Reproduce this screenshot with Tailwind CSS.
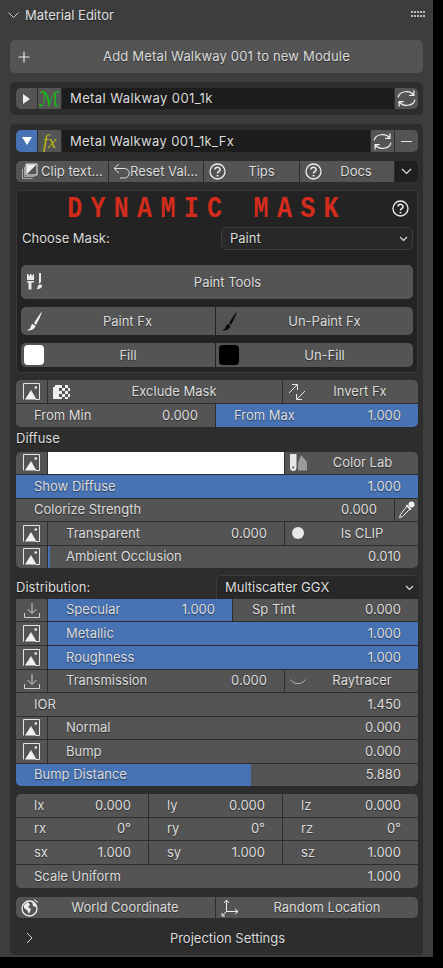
<!DOCTYPE html>
<html>
<head>
<meta charset="utf-8">
<script src="https://cdn.jsdelivr.net/npm/@tailwindcss/browser@4"></script>
</head>
<body class="bg-black">
<div class="w-[443px] h-[968px] overflow-hidden bg-black font-['Inter','Liberation_Sans',sans-serif] text-[13px] leading-none text-[#dcdcdc] [text-shadow:0_1px_1px_#0000007a]">
<div class="w-[433px] h-[957px] bg-[#3d3d3d] px-[10px]">

  <div class="h-[40px] flex items-center relative -mx-[2px]">
    <svg class="w-[11px] h-[7px] -mt-[9px]" viewBox="0 0 11 7" fill="none" stroke="#cfcfcf" stroke-width="1"><path d="M.5 .5l5 5 5-5"/></svg>
    <span class="ml-[6px] -mt-[9px] text-[#e0e0e0]">Material Editor</span>
    <svg class="absolute right-[-1px] top-[11px] w-[15px] h-[7px]" viewBox="0 0 15 7" fill="#bdbdbd"><rect x="0" y="0" width="2" height="2"/><rect x="3" y="0" width="2" height="2"/><rect x="6" y="0" width="2" height="2"/><rect x="9" y="0" width="2" height="2"/><rect x="12" y="0" width="2" height="2"/><rect x="0" y="4" width="2" height="2"/><rect x="3" y="4" width="2" height="2"/><rect x="6" y="4" width="2" height="2"/><rect x="9" y="4" width="2" height="2"/><rect x="12" y="4" width="2" height="2"/></svg>
  </div>

  <div class="h-[33px] rounded-[5px] bg-[#545454] flex items-center relative">
    <svg class="absolute left-[8px] w-[12px] h-[12px]" viewBox="0 0 12 12" stroke="#e6e6e6" stroke-width="1.2"><path d="M6 0.5v11M0.5 6h11"/></svg>
    <span class="w-full text-center pl-[20px] tracking-[0.17px]">Add Metal Walkway 001 to new Module</span>
  </div>

  <div class="mt-[9px] h-[33px] rounded-[5px] bg-[#2d2d2d] pl-[6px] pr-[5px] pt-[6px]">
    <div class="h-[21px] flex gap-px rounded-[5px] overflow-hidden">
      <div class="w-[21px] bg-[#545454] flex items-center justify-center"><svg class="w-[9px] h-[10px]" viewBox="0 0 9 10" fill="#eee"><path d="M1 0l7 5-7 5z"/></svg></div>
      <div class="w-[23px] bg-[#545454] flex items-center justify-center font-['DejaVu_Sans',sans-serif] italic text-[20px] text-[#12c012] [text-shadow:none]">ℳ</div>
      <div class="w-[332px] bg-[#1d1d1d] flex items-center pl-[8px] tracking-[0.4px]">Metal Walkway 001_1k</div>
      <div class="flex-1 bg-[#545454] flex items-center justify-center">
        <svg class="w-[19px] h-[19px]" viewBox="0 0 18 18" fill="none" stroke="#f0f0f0" stroke-width="1.150"><path d="M1 8a8 6.500 0 0 1 15-2M16 1.500V6h-4.500M17 10a8 6.500 0 0 1-15 2M2 16.500V12h4.500"/></svg>
      </div>
    </div>
  </div>

  <div class="mt-[9px] h-[831px] rounded-[5px] bg-[#2d2d2d] pl-[6px] pr-[5px] pt-[6px]">

    <div class="h-[22px] flex gap-px rounded-[5px] overflow-hidden">
      <div class="w-[21px] bg-[#4772b3] flex items-center justify-center"><svg class="w-[10px] h-[8px]" viewBox="0 0 10 8" fill="#fff"><path d="M0 0h10l-5 8z"/></svg></div>
      <div class="w-[23px] bg-[#545454] flex items-center justify-center font-['Liberation_Serif',serif] italic text-[19px] text-[#b9b416] [text-shadow:none]">fx</div>
      <div class="w-[308px] bg-[#1d1d1d] flex items-center pl-[8px] tracking-[0.36px]">Metal Walkway 001_1k_Fx</div>
      <div class="w-[23px] bg-[#545454] flex items-center justify-center">
        <svg class="w-[19px] h-[19px]" viewBox="0 0 18 18" fill="none" stroke="#f0f0f0" stroke-width="1.150"><path d="M1 8a8 6.500 0 0 1 15-2M16 1.500V6h-4.500M17 10a8 6.500 0 0 1-15 2M2 16.500V12h4.500"/></svg>
      </div>
      <div class="flex-1 bg-[#545454] flex items-center justify-center"><span class="w-[11px] h-px bg-[#e6e6e6]"></span></div>
    </div>

    <div class="mt-[9px] h-[21px] flex gap-px rounded-[5px] overflow-hidden">
      <div class="w-[92px] bg-[#545454] flex items-center pl-[5px] gap-[3px]">
        <svg class="w-[17px] h-[17px] shrink-0" viewBox="0 0 17 17" fill="none"><path d="M5 1h11v11H5z" fill="#545454" stroke="#eee"/><path d="M5.500 11.500V1.500H15.500z" fill="#eee"/><path d="M3.500 4v9.500h10M1.500 6v9.500h10" stroke="#a8a8a8"/></svg>
        <span class="whitespace-nowrap">Clip text...</span>
      </div>
      <div class="w-[94px] bg-[#545454] flex items-center pl-[4px] whitespace-nowrap">
        <svg class="w-[17px] h-[17px] shrink-0" viewBox="0 0 17 17" fill="none" stroke="#e0e0e0"><path d="M6 1L1 5.500l5 4.500M1.500 5.500h10a4.500 4.500 0 0 1 0 9.500H7"/></svg>
        <span>Reset Val...</span>
      </div>
      <div class="w-[95px] bg-[#545454] flex items-center relative">
        <svg class="absolute left-[5px] w-[17px] h-[17px]" viewBox="0 0 17 17" fill="none" stroke="#eee" stroke-width="1.300"><circle cx="8.500" cy="8.500" r="7.500"/><path d="M6 6.500a2.500 2.300 0 1 1 3.700 2.100c-.9.500-1.200 1-1.200 1.900" stroke-width="1.600"/><path d="M8.500 12v1.400" stroke-width="1.800"/></svg>
        <span class="w-full text-center pl-[20px]">Tips</span>
      </div>
      <div class="w-[94px] bg-[#545454] flex items-center relative">
        <svg class="absolute left-[5px] w-[17px] h-[17px]" viewBox="0 0 17 17" fill="none" stroke="#eee" stroke-width="1.300"><circle cx="8.500" cy="8.500" r="7.500"/><path d="M6 6.500a2.500 2.300 0 1 1 3.700 2.100c-.9.500-1.200 1-1.200 1.900" stroke-width="1.600"/><path d="M8.500 12v1.400" stroke-width="1.800"/></svg>
        <span class="w-full text-center pl-[18px]">Docs</span>
      </div>
      <div class="flex-1 bg-[#1f1f1f] flex items-center justify-center"><svg class="w-[11px] h-[7px]" viewBox="0 0 11 7" fill="none" stroke="#e0e0e0" stroke-width="1.200"><path d="M1 1l4.500 4.500L10 1"/></svg></div>
    </div>

    <div class="mt-[8px] h-[183px] rounded-[5px] bg-[#232323] border border-[#3a3a3a] px-[4px] relative">
      <div class="h-[35px] flex items-center justify-center pr-[20px] pt-[1px] font-['Liberation_Mono',monospace] font-bold text-[25px] tracking-[8.3px] text-[#d42c1c] [text-shadow:none] whitespace-pre"><span class="inline-block scale-y-[1.17]">DYNAMIC MASK</span></div>
      <svg class="absolute right-[8px] top-[9px] w-[17px] h-[17px]" viewBox="0 0 17 17" fill="none" stroke="#eee" stroke-width="1.300"><circle cx="8.500" cy="8.500" r="7.500"/><path d="M6 6.500a2.500 2.300 0 1 1 3.700 2.100c-.9.500-1.200 1-1.200 1.900" stroke-width="1.600"/><path d="M8.500 12v1.400" stroke-width="1.800"/></svg>
      <div class="h-[23px] flex items-center justify-between mt-[1px]">
        <span class="pl-px">Choose Mask:</span>
        <div class="w-[192px] h-[23px] rounded-[5px] bg-[#282828] border border-[#3d3d3d] flex items-center justify-between pl-[8px] pr-[4px]">
          <span>Paint</span>
          <svg class="w-[9px] h-[6px]" viewBox="0 0 9 6" fill="none" stroke="#e0e0e0" stroke-width="1.200"><path d="M1 1l3.500 3.500L8 1"/></svg>
        </div>
      </div>
      <div class="mt-[15px] h-[34px] rounded-[5px] bg-[#545454] flex items-center relative">
        <svg class="absolute left-[5px] w-[18px] h-[18px]" viewBox="0 0 18 18" fill="#e8e8e8"><path d="M1 1h1.500v1.500H4V1h1.500v1.500H7V1h1v6H1zM1 8h7v1.500H5.500V16.500h-3V9.500H1z"/><path d="M13 0h2v9l-2 2zM12 12.500c1-1.200 3.500-1.200 4 .2.200 2-2 3.800-5.500 3.300 1-.6 1.200-2 1.500-3.500z"/></svg>
        <span class="w-full text-center pl-[21px]">Paint Tools</span>
      </div>
      <div class="mt-[8px] h-[28px] rounded-[5px] overflow-hidden flex gap-px">
        <div class="w-[194px] bg-[#545454] flex items-center relative">
          <svg class="absolute left-[5px] w-[17px] h-[20px]" viewBox="0 0 17 20" fill="#f0f0f0"><path d="M16 0C14 3 11 7 8 12l2 2c2-4 5-9 6-14zM7 13c-2.500.5-2 3-3 4.500L1 19.500c3 .5 7-.5 8.500-4.500z"/></svg>
          <span class="w-full text-center pl-[19px]">Paint Fx</span>
        </div>
        <div class="flex-1 bg-[#545454] flex items-center relative">
          <svg class="absolute left-[5px] w-[17px] h-[20px]" viewBox="0 0 17 20" fill="#0c0c0c"><path d="M16 0C14 3 11 7 8 12l2 2c2-4 5-9 6-14zM7 13c-2.500.5-2 3-3 4.500L1 19.500c3 .5 7-.5 8.500-4.500z"/></svg>
          <span class="w-full text-center pl-[20px]">Un-Paint Fx</span>
        </div>
      </div>
      <div class="mt-[8px] h-[24px] rounded-[5px] overflow-hidden flex gap-px">
        <div class="w-[194px] bg-[#545454] flex items-center relative">
          <span class="absolute left-[3px] w-[20px] h-[20px] rounded-[4px] bg-white"></span>
          <span class="w-full text-center pl-[20px]">Fill</span>
        </div>
        <div class="flex-1 bg-[#545454] flex items-center relative">
          <span class="absolute left-[3px] w-[20px] h-[20px] rounded-[4px] bg-black"></span>
          <span class="w-full text-center pl-[20px]">Un-Fill</span>
        </div>
      </div>
    </div>

    <div class="mt-[7px] rounded-[5px] overflow-hidden flex flex-col gap-px">
      <div class="h-[23px] flex gap-px">
        <div class="w-[31px] bg-[#545454] flex items-center justify-center">
          <svg class="w-[17px] h-[17px]" viewBox="0 0 17 17" fill="none"><path d="M.5 16.500V.5h16v16h-4" stroke="#e4e4e4"/><path d="M8 7l5.500 9.500H2z" fill="#f0f0f0"/><circle cx="12.800" cy="4.500" r="1.300" fill="#f0f0f0"/></svg>
        </div>
        <div class="w-[234px] bg-[#545454] flex items-center relative">
          <svg class="absolute left-[5px] w-[17px] h-[14px]" viewBox="0 0 17 14" fill="#eee"><path d="M0 2h2V0h4v14H0z"/><path d="M6 0h3v3H6zM12 0h3v3h-3zM9 3h3v3H9zM15 3h2v3h-2zM6 6h3v3H6zM12 6h3v3h-3zM9 9h3v3H9zM15 9h2v3h-2zM6 12h3v2H6zM12 12h3v2h-3z"/></svg>
          <span class="w-full text-center pl-[18px]">Exclude Mask</span>
        </div>
        <div class="flex-1 bg-[#545454] flex items-center relative">
          <svg class="absolute left-[5px] w-[18px] h-[18px]" viewBox="0 0 18 18" fill="none" stroke="#e6e6e6"><path d="M1 10l8-8M4 1.500h5.500V7M17 8l-8 8M14 16.500H8.500V11"/></svg>
          <span class="w-full text-center pl-[19px]">Invert Fx</span>
        </div>
      </div>
      <div class="h-[23px] flex gap-px">
        <div class="w-[199px] bg-[#545454] flex items-center justify-between pl-[18px] pr-[17px]"><span>From Min</span><span>0.000</span></div>
        <div class="flex-1 bg-[#4772b3] flex items-center justify-between pl-[18px] pr-[17px]"><span>From Max</span><span>1.000</span></div>
      </div>
    </div>

    <div class="h-[25px] flex items-center pb-[3px]">Diffuse</div>

    <div class="rounded-[5px] overflow-hidden flex flex-col gap-px">
      <div class="h-[22px] flex gap-px [&>div]:pb-px">
        <div class="w-[31px] bg-[#545454] flex items-center justify-center">
          <svg class="w-[17px] h-[17px]" viewBox="0 0 17 17" fill="none"><path d="M.5 16.500V.5h16v16h-4" stroke="#e4e4e4"/><path d="M8 7l5.500 9.500H2z" fill="#f0f0f0"/><circle cx="12.800" cy="4.500" r="1.300" fill="#f0f0f0"/></svg>
        </div>
        <div class="w-[236px] bg-white"></div>
        <div class="flex-1 bg-[#545454] flex items-center relative">
          <svg class="absolute left-[5px] w-[17px] h-[17px]" viewBox="0 0 17 17"><path d="M8 9l3-8 6 7v8.500H8z" fill="#9a9a9a"/><path d="M0 0h6.500v14a3.200 3 0 0 1-6.500 0z" fill="#e6e6e6"/><circle cx="3.200" cy="13.500" r="1.100" fill="#545454"/></svg>
          <span class="w-full text-center pl-[22px]">Color Lab</span>
        </div>
      </div>
      <div class="h-[23px] bg-[#4772b3] flex items-center justify-between pl-[18px] pr-[17px]"><span>Show Diffuse</span><span>1.000</span></div>
      <div class="h-[22px] flex gap-px [&>div]:pb-px">
        <div class="w-[378px] bg-[#545454] flex items-center justify-between pl-[18px] pr-[17px]"><span>Colorize Strength</span><span>0.000</span></div>
        <div class="flex-1 bg-[#545454] flex items-center justify-center">
          <svg class="w-[17px] h-[17px]" viewBox="0 0 17 17" fill="none"><circle cx="13.500" cy="3.500" r="3" fill="#f0f0f0"/><path d="M9 3.500l4.500 4.500-1.200 1.200L7.800 4.700z" fill="#f0f0f0"/><path d="M9 5l3 3-7.500 7.500-3 1 1-3z" stroke="#f0f0f0"/></svg>
        </div>
      </div>
      <div class="h-[23px] flex gap-px [&>div]:pb-px">
        <div class="w-[31px] bg-[#545454] flex items-center justify-center">
          <svg class="w-[17px] h-[17px]" viewBox="0 0 17 17" fill="none"><path d="M.5 16.500V.5h16v16h-4" stroke="#e4e4e4"/><path d="M8 7l5.500 9.500H2z" fill="#f0f0f0"/><circle cx="12.800" cy="4.500" r="1.300" fill="#f0f0f0"/></svg>
        </div>
        <div class="w-[236px] bg-[#545454] flex items-center justify-between pl-[18px] pr-[17px]"><span>Transparent</span><span>0.000</span></div>
        <div class="flex-1 bg-[#545454] flex items-center relative">
          <span class="absolute left-[7px] w-[12px] h-[12px] rounded-full bg-[#e8e8e8]"></span>
          <span class="w-full text-center pl-[21px]">Is CLIP</span>
        </div>
      </div>
      <div class="h-[22px] flex gap-px [&>div]:pb-px">
        <div class="w-[31px] bg-[#545454] flex items-center justify-center">
          <svg class="w-[17px] h-[17px]" viewBox="0 0 17 17" fill="none"><path d="M.5 16.500V.5h16v16h-4" stroke="#e4e4e4"/><path d="M8 7l5.500 9.500H2z" fill="#f0f0f0"/><circle cx="12.800" cy="4.500" r="1.300" fill="#f0f0f0"/></svg>
        </div>
        <div class="flex-1 bg-[#545454] border-l-[2px] border-[#4772b3] flex items-center justify-between pl-[16px] pr-[17px]"><span>Ambient Occlusion</span><span>0.010</span></div>
      </div>
    </div>

    <div class="mt-[7px] h-[24px] flex items-center justify-between">
      <span>Distribution:</span>
      <div class="w-[202px] h-[24px] rounded-t-[5px] bg-[#282828] border-t border-l border-[#3d3d3d] flex items-center justify-between pl-[8px] pr-[4px]">
        <span>Multiscatter GGX</span>
        <svg class="w-[9px] h-[6px]" viewBox="0 0 9 6" fill="none" stroke="#e0e0e0" stroke-width="1.200"><path d="M1 1l3.500 3.500L8 1"/></svg>
      </div>
    </div>

    <div class="rounded-b-[5px] overflow-hidden flex flex-col gap-px">
      <div class="h-[22px] flex gap-px [&>div]:pb-px">
        <div class="w-[31px] bg-[#545454] flex items-center justify-center">
          <svg class="w-[16px] h-[16px]" viewBox="0 0 16 16" fill="none" stroke="#cfcfcf"><path d="M8 1v10M3.500 7L8 11.500 12.500 7M.5 11v4.500h15V11"/></svg>
        </div>
        <div class="w-[184px] bg-[#4772b3] flex items-center justify-between pl-[18px] pr-[17px]"><span>Specular</span><span>1.000</span></div>
        <div class="flex-1 bg-[#545454] flex items-center justify-between pl-[19px] pr-[17px]"><span>Sp Tint</span><span>0.000</span></div>
      </div>
      <div class="h-[23px] flex gap-px">
        <div class="w-[31px] bg-[#545454] flex items-center justify-center">
          <svg class="w-[17px] h-[17px]" viewBox="0 0 17 17" fill="none"><path d="M.5 16.500V.5h16v16h-4" stroke="#e4e4e4"/><path d="M8 7l5.500 9.500H2z" fill="#f0f0f0"/><circle cx="12.800" cy="4.500" r="1.300" fill="#f0f0f0"/></svg>
        </div>
        <div class="flex-1 bg-[#4772b3] flex items-center justify-between pl-[18px] pr-[17px]"><span>Metallic</span><span>1.000</span></div>
      </div>
      <div class="h-[23px] flex gap-px">
        <div class="w-[31px] bg-[#545454] flex items-center justify-center">
          <svg class="w-[17px] h-[17px]" viewBox="0 0 17 17" fill="none"><path d="M.5 16.500V.5h16v16h-4" stroke="#e4e4e4"/><path d="M8 7l5.500 9.500H2z" fill="#f0f0f0"/><circle cx="12.800" cy="4.500" r="1.300" fill="#f0f0f0"/></svg>
        </div>
        <div class="flex-1 bg-[#4772b3] flex items-center justify-between pl-[18px] pr-[17px]"><span>Roughness</span><span>1.000</span></div>
      </div>
      <div class="h-[22px] flex gap-px [&>div]:pb-px">
        <div class="w-[31px] bg-[#545454] flex items-center justify-center">
          <svg class="w-[16px] h-[16px]" viewBox="0 0 16 16" fill="none" stroke="#cfcfcf"><path d="M8 1v10M3.500 7L8 11.500 12.500 7M.5 11v4.500h15V11"/></svg>
        </div>
        <div class="w-[236px] bg-[#545454] flex items-center justify-between pl-[18px] pr-[17px]"><span>Transmission</span><span>0.000</span></div>
        <div class="flex-1 bg-[#545454] flex items-center relative">
          <svg class="absolute left-[5px] top-[9px] w-[16px] h-[6px]" viewBox="0 0 16 6" fill="none" stroke="#b5b5b5"><path d="M.5.5c3 5.500 12 5.500 15 0"/></svg>
          <span class="w-full text-center pl-[21px]">Raytracer</span>
        </div>
      </div>
      <div class="h-[23px] bg-[#545454] flex items-center justify-between pl-[18px] pr-[17px]"><span>IOR</span><span>1.450</span></div>
      <div class="h-[22px] flex gap-px [&>div]:pb-px">
        <div class="w-[31px] bg-[#545454] flex items-center justify-center">
          <svg class="w-[17px] h-[17px]" viewBox="0 0 17 17" fill="none"><path d="M.5 16.500V.5h16v16h-4" stroke="#e4e4e4"/><path d="M8 7l5.500 9.500H2z" fill="#f0f0f0"/><circle cx="12.800" cy="4.500" r="1.300" fill="#f0f0f0"/></svg>
        </div>
        <div class="flex-1 bg-[#545454] flex items-center justify-between pl-[18px] pr-[17px]"><span>Normal</span><span>0.000</span></div>
      </div>
      <div class="h-[23px] flex gap-px">
        <div class="w-[31px] bg-[#545454] flex items-center justify-center">
          <svg class="w-[17px] h-[17px]" viewBox="0 0 17 17" fill="none"><path d="M.5 16.500V.5h16v16h-4" stroke="#e4e4e4"/><path d="M8 7l5.500 9.500H2z" fill="#f0f0f0"/><circle cx="12.800" cy="4.500" r="1.300" fill="#f0f0f0"/></svg>
        </div>
        <div class="flex-1 bg-[#545454] flex items-center justify-between pl-[18px] pr-[17px]"><span>Bump</span><span>0.000</span></div>
      </div>
      <div class="h-[22px] pb-px bg-[linear-gradient(to_right,#4772b3_235px,#545454_235px)] flex items-center justify-between pl-[18px] pr-[17px]"><span>Bump Distance</span><span>5.880</span></div>
    </div>

    <div class="mt-[8px] rounded-[5px] overflow-hidden flex flex-col gap-px">
      <div class="h-[23px] flex gap-px">
        <div class="w-[132px] bg-[#545454] flex items-center justify-between pl-[18px] pr-[17px]"><span>lx</span><span>0.000</span></div>
        <div class="w-[133px] bg-[#545454] flex items-center justify-between pl-[18px] pr-[17px]"><span>ly</span><span>0.000</span></div>
        <div class="flex-1 bg-[#545454] flex items-center justify-between pl-[18px] pr-[17px]"><span>lz</span><span>0.000</span></div>
      </div>
      <div class="h-[22px] flex gap-px [&>div]:pb-px">
        <div class="w-[132px] bg-[#545454] flex items-center justify-between pl-[18px] pr-[17px]"><span>rx</span><span>0°</span></div>
        <div class="w-[133px] bg-[#545454] flex items-center justify-between pl-[18px] pr-[17px]"><span>ry</span><span>0°</span></div>
        <div class="flex-1 bg-[#545454] flex items-center justify-between pl-[18px] pr-[17px]"><span>rz</span><span>0°</span></div>
      </div>
      <div class="h-[23px] flex gap-px">
        <div class="w-[132px] bg-[#545454] flex items-center justify-between pl-[18px] pr-[17px]"><span>sx</span><span>1.000</span></div>
        <div class="w-[133px] bg-[#545454] flex items-center justify-between pl-[18px] pr-[17px]"><span>sy</span><span>1.000</span></div>
        <div class="flex-1 bg-[#545454] flex items-center justify-between pl-[18px] pr-[17px]"><span>sz</span><span>1.000</span></div>
      </div>
      <div class="h-[23px] bg-[#545454] flex items-center justify-between pl-[18px] pr-[17px]"><span>Scale Uniform</span><span>1.000</span></div>
    </div>

    <div class="mt-[9px] h-[21px] rounded-[5px] overflow-hidden flex gap-px">
      <div class="w-[199px] bg-[#545454] flex items-center relative">
        <svg class="absolute left-[5px] w-[18px] h-[18px]" viewBox="0 0 18 18" fill="none"><circle cx="8.500" cy="9.500" r="7.500" stroke="#eee" stroke-width="1.300"/><path d="M3 6l4-3 2 3-2 2 3 2-2 5-2-4-3-2zM11 3l4 3 0 2-3-1z" fill="#eee"/><path d="M13 .5l4 3" stroke="#eee"/></svg>
        <span class="w-full text-center pl-[19px]">World Coordinate</span>
      </div>
      <div class="flex-1 bg-[#545454] flex items-center relative">
        <svg class="absolute left-[5px] w-[18px] h-[18px]" viewBox="0 0 18 18" fill="none" stroke="#eee"><path d="M5.500 1.500v11.500M3 4l2.500-3L8 4M5.500 12.500h11.500M14 10l3 2.500-3 2.500M5.500 12.500L1 17M1 14v3h3"/></svg>
        <span class="w-full text-center pl-[20px]">Random Location</span>
      </div>
    </div>

    <div class="mt-[9px] h-[22px] flex items-center relative">
      <svg class="absolute left-[10px] w-[7px] h-[12px]" viewBox="0 0 7 12" fill="none" stroke="#d0d0d0"><path d="M1 1l5 5-5 5"/></svg>
      <span class="w-full text-center pl-[21px]">Projection Settings</span>
    </div>

  </div>
</div>
</div>
</body>
</html>
